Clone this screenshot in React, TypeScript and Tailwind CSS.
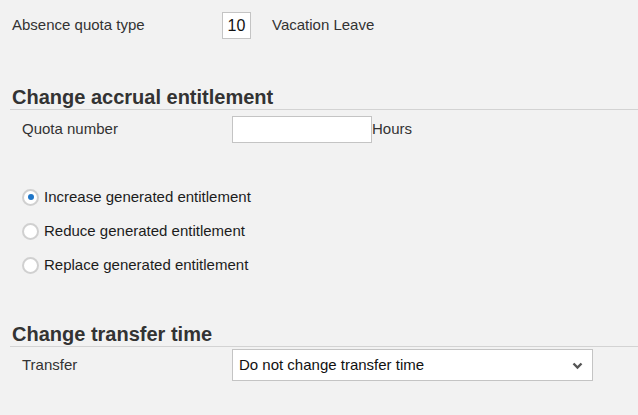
import React from 'react';

const font = { fontFamily: '"Liberation Sans", Arial, sans-serif' };

const SectionTitle: React.FC<{ title: string }> = ({ title }) => (
    <div className="ml-[10px] border-b border-[#d3d3d3]">
        <h2 className="pl-[2px] h-[24px] text-[20px] leading-[24px] font-bold text-[#333333]">{title}</h2>
    </div>
);

const Radio: React.FC<{ label: string; checked?: boolean }> = ({ label, checked = false }) => (
    <label className="flex items-center h-[34px] pl-[22px] cursor-pointer">
        <span className="flex items-center justify-center w-[17px] h-[17px] rounded-full bg-white border-2 border-[#d0d0d0]">
            {checked && <span className="w-[6px] h-[6px] rounded-full bg-[#1f76c8]" />}
        </span>
        <span className="ml-[5px] text-[15px] text-[#1c1c1c]">{label}</span>
    </label>
);

export default function App() {
    return (
        <div className="w-[638px] h-[415px] bg-[#f2f2f2] overflow-hidden" style={font}>
            <div className="flex items-center h-[27px] mt-[12px] pl-3 text-[15px] text-[#333333]">
                <span className="w-[210px]">Absence quota type</span>
                <div className="w-[29px] h-[27px] bg-white border border-[#c4c4c4] flex items-center justify-center text-[16px] text-[#111]">10</div>
                <span className="ml-[21px]">Vacation Leave</span>
            </div>

            <div className="mt-[46px]">
                <SectionTitle title="Change accrual entitlement" />
            </div>
            <div className="flex items-center h-[27px] mt-[6px] pl-[22px] text-[15px] text-[#333333]">
                <span className="w-[210px]">Quota number</span>
                <input className="w-[140px] h-[27px] bg-white border border-[#c4c4c4] outline-none" />
                <span>Hours</span>
            </div>

            <div className="mt-[37px]">
                <Radio label="Increase generated entitlement" checked />
                <Radio label="Reduce generated entitlement" />
                <Radio label="Replace generated entitlement" />
            </div>

            <div className="mt-[40px]">
                <SectionTitle title="Change transfer time" />
            </div>
            <div className="flex items-center h-[32px] mt-[2px] pl-[22px] text-[15px] text-[#333333]">
                <span className="w-[210px]">Transfer</span>
                <div className="relative w-[361px] h-[32px] bg-white border border-[#c4c4c4] flex items-center pl-[6px] text-[#111]">
                    <span>Do not change transfer time</span>
                    <svg className="absolute right-[9px] top-[12px]" width="11" height="8" viewBox="0 0 11 8">
                        <path d="M1.5 1.5 L5.5 5.5 L9.5 1.5" fill="none" stroke="#555" strokeWidth="2.4" />
                    </svg>
                </div>
            </div>
        </div>
    );
}
